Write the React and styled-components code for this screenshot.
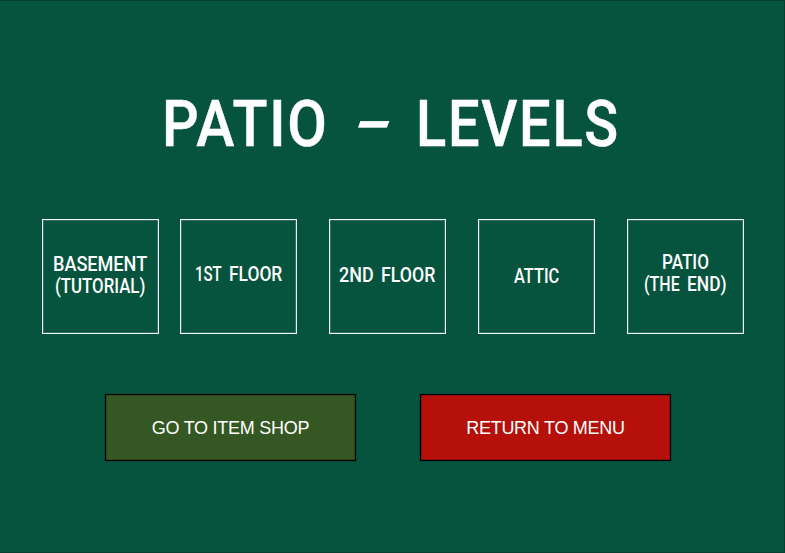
import React, { useLayoutEffect, useRef, useState } from "react";
import styled, { createGlobalStyle } from "styled-components";

const GlobalStyle = createGlobalStyle`
  * { box-sizing: border-box; }
  body { margin: 0; background: #07543e; }
`;

const Screen = styled.main`
  width: 785px;
  height: 553px;
  overflow: hidden;
  background: #07543e;
  border: 1px solid #06402f;
  border-left: 0;
  color: #fff;
  font-family: Roboto, "Liberation Sans", sans-serif;
`;

const Title = styled.h1`
  display: flex;
  margin: 0;
  padding: 85px 0 0 162px;
  height: 218px;
  gap: 27px;
  font-size: 65px;
  line-height: 76px;
  font-weight: 500;
  letter-spacing: 2px;
  -webkit-text-stroke: 0.5px #fff;
`;

const Dash = styled.span`
  display: block;
  margin: 0 3px 0 -10px;
  transform: translateY(-2px) skewX(-20deg);
`;

const Levels = styled.nav`
  display: flex;
  gap: 32px;
  padding-left: 42px;
`;

const Level = styled.button`
  display: flex;
  flex: none;
  flex-direction: column;
  align-items: center;
  width: 117px;
  height: 115px;
  margin: 0 0 0 ${(p) => p.$shift || 0}px;
  padding: ${(p) => p.$top}px 0 0;
  border: 1px solid #f2f6f5;
  box-shadow: inset 0 0 0 1px rgba(255, 255, 255, 0.18);
  background: transparent;
  color: #fff;
  font: 500 20px/22px Roboto, "Liberation Sans", sans-serif;
`;

const Line = styled.span`
  display: flex;
  gap: 7px;
  margin-left: -1px;
`;

const WordBox = styled.span`
  display: block;
  width: ${(p) => p.$width}px;
  white-space: nowrap;
`;

const Glyphs = styled.span`
  display: inline-block;
  transform-origin: 0 50%;
`;

const Actions = styled.div`
  display: flex;
  gap: 64px;
  padding: 60px 0 0 105px;
`;

const Action = styled.button`
  width: 251px;
  height: 67px;
  padding: 2px 0 0;
  border: 1px solid #000;
  box-shadow: inset 0 0 0 1px rgba(0, 0, 0, 0.2), 0 0 0 1px rgba(0, 0, 0, 0.12);
  background: ${(p) => p.$color};
  color: #fff;
  font: 18px "Liberation Sans", Arial, sans-serif;
  letter-spacing: -0.27px;
`;

function Word({ width, children }) {
  const ref = useRef(null);
  const [scale, setScale] = useState(1);
  useLayoutEffect(() => {
    setScale(width / ref.current.offsetWidth);
  }, [width, children]);
  return (
    <WordBox $width={width}>
      <Glyphs ref={ref} style={{ transform: `scaleX(${scale})` }}>{children}</Glyphs>
    </WordBox>
  );
}

const levels = [
  { top: 33, lines: [[["BASEMENT", 94]], [["(TUTORIAL)", 90]]] },
  { top: 43, shift: -11, lines: [[["1ST", 27], ["FLOOR", 53]]] },
  { top: 44, lines: [[["2ND", 35], ["FLOOR", 54]]] },
  { top: 45, lines: [[["ATTIC", 45]]] },
  { top: 31, lines: [[["PATIO", 47]], [["(THE", 36], ["END)", 40]]] },
];

export default function App() {
  return (
    <>
      <GlobalStyle />
      <Screen>
        <Title>
          <Word width={167}>PATIO</Word>
          <Dash><Word width={40}>-</Word></Dash>
          <Word width={204}>LEVELS</Word>
        </Title>
        <Levels>
          {levels.map((level, i) => (
            <Level key={i} $top={level.top} $shift={level.shift}>
              {level.lines.map((words, j) => (
                <Line key={j}>
                  {words.map(([text, width]) => (
                    <Word key={text} width={width}>{text}</Word>
                  ))}
                </Line>
              ))}
            </Level>
          ))}
        </Levels>
        <Actions>
          <Action $color="#355724">GO TO ITEM SHOP</Action>
          <Action $color="#b5100a">RETURN TO MENU</Action>
        </Actions>
      </Screen>
    </>
  );
}
